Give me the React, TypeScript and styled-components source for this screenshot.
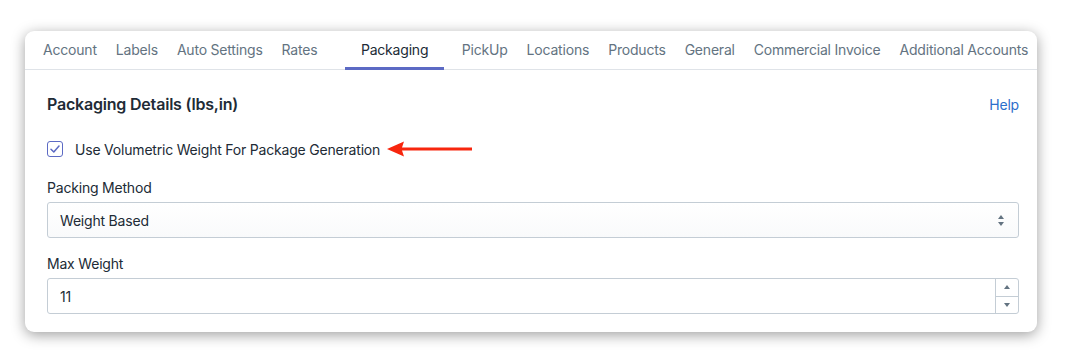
import styled, { createGlobalStyle } from 'styled-components';

const tabs = [
  'Account',
  'Labels',
  'Auto Settings',
  'Rates',
  'Packaging',
  'PickUp',
  'Locations',
  'Products',
  'General',
  'Commercial Invoice',
  'Additional Accounts',
];

const ACTIVE = 'Packaging';

const GlobalStyle = createGlobalStyle`
  body {
    margin: 0;
    background: #fff;
    font-family: Inter, "Noto Sans", sans-serif;
    letter-spacing: -0.2px;
    -webkit-font-smoothing: antialiased;
  }
`;

const ArrowIcon = () => (
  <svg width="86" height="16" viewBox="0 0 86 16">
    <path d="M0 8 L17 0.5 L15 6.4 L85 6.4 L85 9.6 L15 9.6 L17 15.5 Z" fill="#f7260e" />
  </svg>
);

const CheckIcon = () => (
  <svg width="10" height="8" viewBox="0 0 10 8">
    <path d="M1 4.2 L3.8 7 L9 1" fill="none" stroke="#5c6ac4" strokeWidth="1.5" strokeLinecap="round" strokeLinejoin="round" />
  </svg>
);

const App = () => {
  return (
    <>
      <GlobalStyle />
      <Page>
        <Card>
          <TabList>
            {tabs.map((tab) => (
              <Tab key={tab} $active={tab === ACTIVE}>
                {tab}
              </Tab>
            ))}
          </TabList>
          <Body>
            <HeaderRow>
              <Title>Packaging Details (lbs,in)</Title>
              <HelpLink href="#">Help</HelpLink>
            </HeaderRow>
            <CheckRow>
              <CheckBox>
                <CheckIcon />
              </CheckBox>
              <CheckLabel>Use Volumetric Weight For Package Generation</CheckLabel>
              <ArrowIcon />
            </CheckRow>
            <Field>
              <FieldLabel>Packing Method</FieldLabel>
              <SelectBox>
                <span>Weight Based</span>
                <SelectArrows>
                  <Tri $up />
                  <Tri />
                </SelectArrows>
              </SelectBox>
            </Field>
            <Field>
              <FieldLabel>Max Weight</FieldLabel>
              <NumberBox>
                <NumberValue>11</NumberValue>
                <Spinner>
                  <SpinButton>
                    <Tri $up />
                  </SpinButton>
                  <SpinButton $bottom>
                    <Tri />
                  </SpinButton>
                </Spinner>
              </NumberBox>
            </Field>
          </Body>
        </Card>
      </Page>
    </>
  );
};

const Page = styled.div`
  padding: 31px 29px 32px 25px;
`;

const Card = styled.div`
  background: #fff;
  border-radius: 9px;
  box-shadow: 0 3px 14px rgba(0, 0, 0, 0.38);
  overflow: hidden;
`;

const TabList = styled.div`
  display: flex;
  align-items: stretch;
  height: 38px;
  padding-left: 8.5px;
  border-bottom: 1px solid #dfe3e8;
  white-space: nowrap;
`;

const Tab = styled.div<{ $active: boolean }>`
  display: flex;
  align-items: center;
  padding: ${(p) => (p.$active ? '0 16px' : '0 9.5px')};
  margin: ${(p) => (p.$active ? '0 8px 0 18px' : '0')};
  font-size: 14px;
  color: ${(p) => (p.$active ? '#212b36' : '#637381')};
  border-bottom: 3px solid ${(p) => (p.$active ? '#5c6ac4' : 'transparent')};
  margin-bottom: -1px;
  padding-top: 1px;
`;

const Body = styled.div`
  padding: 21px 18px 18px 22px;
  display: flex;
  flex-direction: column;
`;

const HeaderRow = styled.div`
  display: flex;
  justify-content: space-between;
  align-items: center;
  height: 26px;
`;

const Title = styled.h2`
  margin: 0;
  font-size: 16px;
  font-weight: 600;
  color: #212b36;
`;

const HelpLink = styled.a`
  font-size: 14px;
  color: #2c6ecb;
  text-decoration: none;
`;

const CheckRow = styled.div`
  display: flex;
  align-items: center;
  margin-top: 22px;
  margin-bottom: 3px;
  height: 20px;
`;

const CheckBox = styled.span`
  display: flex;
  align-items: center;
  justify-content: center;
  width: 16px;
  height: 16px;
  box-sizing: border-box;
  border: 1px solid #5c6ac4;
  border-radius: 3px;
  background: #fff;
  margin-right: 12px;
`;

const CheckLabel = styled.span`
  font-size: 14px;
  color: #212b36;
  margin-right: 7px;
`;

const Field = styled.div`
  display: flex;
  flex-direction: column;
  margin-top: 16px;
`;

const FieldLabel = styled.label`
  font-size: 14px;
  color: #212b36;
  line-height: 20px;
  margin-bottom: 4px;
`;

const SelectBox = styled.div`
  display: flex;
  align-items: center;
  justify-content: space-between;
  height: 36px;
  box-sizing: border-box;
  padding: 0 14px 0 12px;
  border: 1px solid #c4cdd5;
  border-radius: 3px;
  background: linear-gradient(180deg, #fff, #f9fafb);
  font-size: 14px;
  color: #212b36;
`;

const SelectArrows = styled.span`
  display: flex;
  flex-direction: column;
  gap: 3px;
`;

const Tri = styled.span<{ $up?: boolean }>`
  width: 0;
  height: 0;
  border-left: 3.5px solid transparent;
  border-right: 3.5px solid transparent;
  ${(p) => (p.$up ? 'border-bottom: 4px solid #637381;' : 'border-top: 4px solid #637381;')}
`;

const NumberBox = styled.div`
  display: flex;
  height: 36px;
  box-sizing: border-box;
  border: 1px solid #c4cdd5;
  border-radius: 3px;
  background: #fff;
`;

const NumberValue = styled.span`
  flex: 1;
  display: flex;
  align-items: center;
  padding-left: 12px;
  font-size: 14px;
  color: #212b36;
`;

const Spinner = styled.div`
  display: flex;
  flex-direction: column;
  width: 22px;
  border-left: 1px solid #c4cdd5;
`;

const SpinButton = styled.div<{ $bottom?: boolean }>`
  flex: 1;
  display: flex;
  align-items: center;
  justify-content: center;
  border-top: ${(p) => (p.$bottom ? '1px solid #c4cdd5' : 'none')};
`;

export default App;
